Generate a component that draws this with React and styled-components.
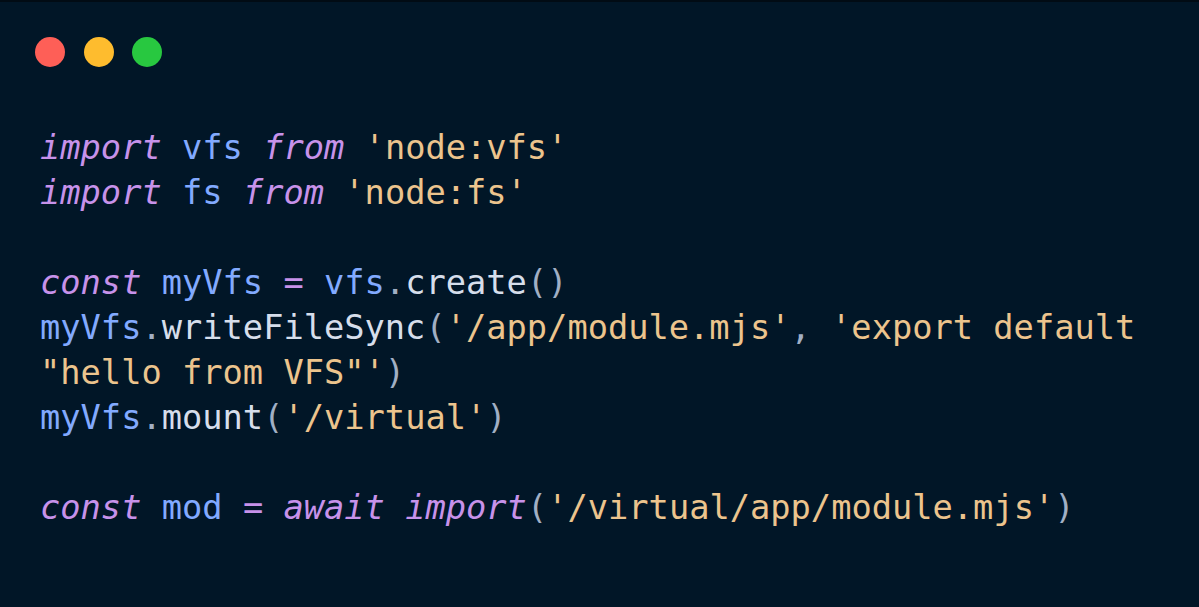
import React from 'react';
import styled, { createGlobalStyle } from 'styled-components';

const GlobalStyle = createGlobalStyle`
  html, body {
    margin: 0;
    padding: 0;
    background: #011627;
  }
`;

const Window = styled.div`
  width: 1199px;
  height: 607px;
  box-sizing: border-box;
  background: #011627;
  border-top: 2px solid #010b14;
  padding: 35px 40px 0 40px;
  overflow: hidden;
`;

const Dots = styled.div`
  display: flex;
  gap: 18.5px;
  margin-left: -5px;
`;

const Dot = styled.span`
  width: 30px;
  height: 30px;
  border-radius: 50%;
  background: ${(p) => p.color};
`;

const Code = styled.pre`
  margin: 58px 0 0 0;
  font-family: "DejaVu Sans Mono", "Liberation Mono", monospace;
  font-size: 33.7px;
  line-height: 45px;
  color: #d6deeb;
  white-space: pre;
`;

const Kw = styled.span`
  color: #c792ea;
  font-style: italic;
`;

const Id = styled.span`
  color: #82aaff;
`;

const Str = styled.span`
  color: #ecc48d;
`;

const Op = styled.span`
  color: #c792ea;
`;

const Punc = styled.span`
  color: #a1afc4;
`;

function App() {
  return (
    <>
      <GlobalStyle />
      <Window>
        <Dots>
          <Dot color="#fe5f57" />
          <Dot color="#febc2e" />
          <Dot color="#28c840" />
        </Dots>
        <Code>
          <Kw>import</Kw> <Id>vfs</Id> <Kw>from</Kw> <Str>'node:vfs'</Str>
          {'\n'}
          <Kw>import</Kw> <Id>fs</Id> <Kw>from</Kw> <Str>'node:fs'</Str>
          {'\n\n'}
          <Kw>const</Kw> <Id>myVfs</Id> <Op>=</Op> <Id>vfs</Id><Punc>.</Punc>create<Punc>()</Punc>
          {'\n'}
          <Id>myVfs</Id><Punc>.</Punc>writeFileSync<Punc>(</Punc><Str>'/app/module.mjs'</Str><Punc>,</Punc> <Str>'export default</Str>
          {'\n'}
          <Str>"hello from VFS"'</Str><Punc>)</Punc>
          {'\n'}
          <Id>myVfs</Id><Punc>.</Punc>mount<Punc>(</Punc><Str>'/virtual'</Str><Punc>)</Punc>
          {'\n\n'}
          <Kw>const</Kw> <Id>mod</Id> <Op>=</Op> <Kw>await</Kw> <Kw>import</Kw><Punc>(</Punc><Str>'/virtual/app/module.mjs'</Str><Punc>)</Punc>
        </Code>
      </Window>
    </>
  );
}

export default App;
